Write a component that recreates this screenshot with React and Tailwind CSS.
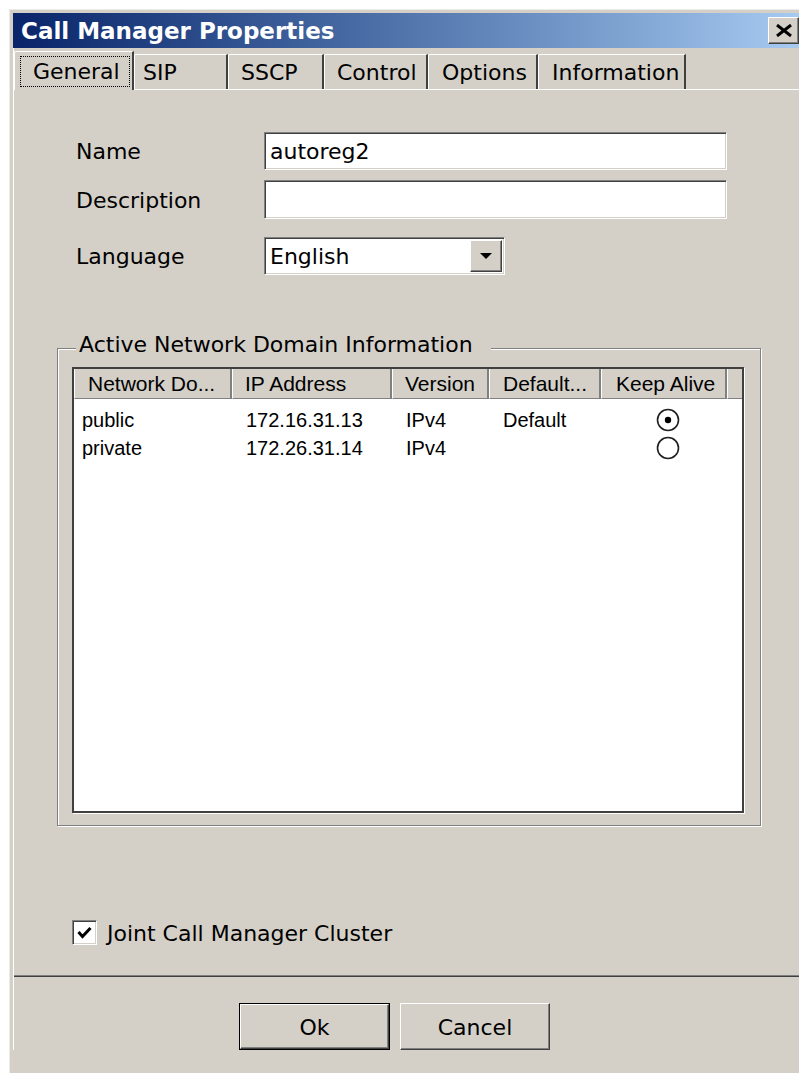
import React from 'react'

const ui = "font-['DejaVu_Sans',sans-serif] text-[22px] leading-none text-black"
const lv = "font-['Liberation_Sans',Arial,sans-serif] text-black"

// classic 3D edges
const raised =
  'border border-t-white border-l-white border-r-[#404040] border-b-[#404040] shadow-[inset_-1px_-1px_0_#808080]'
const sunken =
  'border border-t-[#808080] border-l-[#808080] border-r-white border-b-white shadow-[inset_1px_1px_0_#404040,inset_-1px_-1px_0_#d4d0c8]'

const tabs = [
  { label: 'SIP', cls: 'w-[94px] pl-[8px]' },
  { label: 'SSCP', cls: 'w-[96px] pl-[12px]' },
  { label: 'Control', cls: 'w-[104px] pl-[12px]' },
  { label: 'Options', cls: 'w-[110px] pl-[13px]' },
  { label: 'Information', cls: 'w-[148px] pl-[13px]' },
]

const columns = [
  { label: 'Network Do...', cls: 'w-[158px] pl-[13px]' },
  { label: 'IP Address', cls: 'w-[160px] pl-[12px]' },
  { label: 'Version', cls: 'w-[97px] pl-[12px]' },
  { label: 'Default...', cls: 'w-[112px] pl-[13px]' },
  { label: 'Keep Alive', cls: 'w-[126px] pl-[14px]' },
]

const domains = [
  { name: 'public', ip: '172.16.31.13', version: 'IPv4', def: 'Default', alive: true },
  { name: 'private', ip: '172.26.31.14', version: 'IPv4', def: '', alive: false },
]

function Radio({ checked }) {
  return (
    <svg width="24" height="24" viewBox="0 0 24 24">
      <circle cx="12" cy="12" r="10.5" fill="white" stroke="#202020" strokeWidth="1.6" />
      {checked && <circle cx="12" cy="12" r="3.2" fill="black" />}
    </svg>
  )
}

function Field({ label, children, className }) {
  return (
    <div className={`flex items-center ${className}`}>
      <span className="w-[188px] pt-[2px]">{label}</span>
      {children}
    </div>
  )
}

export default function App() {
  return (
    <div className={`w-[799px] h-[1073px] bg-white overflow-hidden pt-[9px] pl-[9px] ${ui}`}>
      <div className="h-full bg-[#d4d0c8] border-t border-l border-[#ecebe6] pt-[3px] pl-[3px]">
        {/* title bar */}
        <div className="h-[35px] flex items-center justify-between bg-gradient-to-r from-[#0a246a] to-[#a6caf0]">
          <span className="pl-[8px] pt-[1px] text-white font-bold text-[23px]">Call Manager Properties</span>
          <div className={`w-[31px] h-[27px] bg-[#d4d0c8] flex items-center justify-center ${raised}`}>
            <svg width="18" height="13" viewBox="0 0 18 13">
              <path d="M2 1 L16 12 M16 1 L2 12" stroke="black" strokeWidth="3" />
            </svg>
          </div>
        </div>

        <div className="border-l border-white">
          {/* tab strip */}
          <div className="h-[42px] flex items-end border-b border-white">
            <div className="w-[120px] h-[39px] -mb-px bg-[#d4d0c8] border-t border-l border-white border-r-2 border-r-[#404040] rounded-tl-[2px] pl-[5px] pt-[4px]">
              <div className="w-[110px] h-[31px] border border-dotted border-black flex items-center pl-[12px] pt-[1px]">
                General
              </div>
            </div>
            {tabs.map(t => (
              <div
                key={t.label}
                className={`h-[35px] flex items-center border-t border-l border-white border-r-2 border-r-[#404040] rounded-tl-[2px] pt-[2px] ${t.cls}`}
              >
                {t.label}
              </div>
            ))}
          </div>

          {/* tab page */}
          <div className="h-[886px] border-b border-[#808080] shadow-[0_1px_0_#404040] flex flex-col">
            <div className="ml-[62px] mt-[42px] flex flex-col">
              <Field label="Name">
                <div className={`w-[463px] h-[38px] bg-white flex items-center pl-[5px] pt-[2px] ${sunken}`}>autoreg2</div>
              </Field>
              <Field label="Description" className="mt-[10px]">
                <div className={`w-[463px] h-[39px] bg-white ${sunken}`} />
              </Field>
              <Field label="Language" className="mt-[18px]">
                <div className={`w-[241px] h-[38px] bg-white flex items-stretch p-[2px] ${sunken}`}>
                  <span className="flex-1 flex items-center pl-[3px] pt-[2px]">English</span>
                  <div className={`w-[32px] bg-[#d4d0c8] flex items-center justify-center ${raised}`}>
                    <svg width="14" height="8" viewBox="0 0 14 8">
                      <path d="M1 1 H13 L7 7 Z" fill="black" />
                    </svg>
                  </div>
                </div>
              </Field>
            </div>

            {/* group box */}
            <div className="relative ml-[43px] mt-[73px] w-[704px] h-[478px] border border-[#808080] shadow-[inset_1px_1px_0_white,1px_1px_0_white]">
              <span className="absolute left-[18px] top-[-16px] h-[24px] flex items-center bg-[#d4d0c8] pl-[3px] pr-[18px]">
                Active Network Domain Information
              </span>
              <div className="ml-[14px] mt-[18px] w-[672px] h-[446px] bg-white border-2 border-[#404040] shadow-[1px_1px_0_white] flex flex-col">
                <div className={`h-[30px] flex bg-[#d4d0c8] ${lv} text-[21px]`}>
                  {columns.map(c => (
                    <div
                      key={c.label}
                      className={`h-full flex items-center border-l border-white border-r-2 border-r-[#808080] border-b border-b-[#808080] ${c.cls}`}
                    >
                      {c.label}
                    </div>
                  ))}
                  <div className="flex-1 h-full border-l border-white border-b border-b-[#808080]" />
                </div>
                <div className={`pt-[7px] ${lv} text-[20px]`}>
                  {domains.map(d => (
                    <div key={d.name} className="h-[28px] flex items-center">
                      <span className="w-[158px] pl-[8px]">{d.name}</span>
                      <span className="w-[160px] pl-[14px]">{d.ip}</span>
                      <span className="w-[97px] pl-[14px]">{d.version}</span>
                      <span className="w-[112px] pl-[14px]">{d.def}</span>
                      <span className="w-[126px] pl-[55px] flex items-center">
                        <Radio checked={d.alive} />
                      </span>
                    </div>
                  ))}
                </div>
              </div>
            </div>

            {/* cluster option */}
            <div className="ml-[58px] mt-[94px] flex items-center gap-[10px]">
              <div className={`w-[25px] h-[25px] bg-white flex items-center justify-center ${sunken}`}>
                <svg width="15" height="13" viewBox="0 0 15 13">
                  <path d="M1.5 6 L5.5 10.5 L13.5 2" fill="none" stroke="black" strokeWidth="3" />
                </svg>
              </div>
              <span className="pt-[2px]">Joint Call Manager Cluster</span>
            </div>
          </div>

          {/* dialog buttons */}
          <div className="mt-[27px] pl-[225px] flex gap-[10px]">
            <div className="w-[151px] h-[47px] border border-black">
              <div className={`w-full h-full flex items-center justify-center pt-[2px] ${raised}`}>Ok</div>
            </div>
            <div className={`w-[150px] h-[47px] flex items-center justify-center pt-[2px] ${raised}`}>Cancel</div>
          </div>
        </div>
      </div>
    </div>
  )
}
